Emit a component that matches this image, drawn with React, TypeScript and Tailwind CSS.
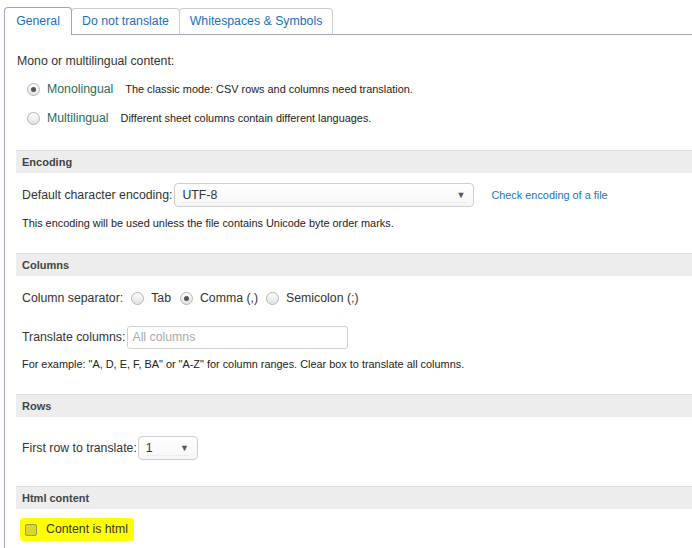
import React from "react";

function Radio({ checked = false }: { checked?: boolean }) {
  return (
    <span className="inline-flex h-[13px] w-[13px] shrink-0 items-center justify-center rounded-full border border-[#b5b5b5] bg-gradient-to-b from-[#fdfdfd] to-[#e2e2e2]">
      {checked && <span className="h-[5px] w-[5px] rounded-full bg-[#555]" />}
    </span>
  );
}

function SectionHeader({ title }: { title: string }) {
  return (
    <div className="ml-[11px] flex h-[23px] items-center border-t border-[#dcdcdc] bg-[#ededed] pl-[6px] text-[11px] font-bold text-[#444]">
      {title}
    </div>
  );
}

function Select({ value, width }: { value: string; width: string }) {
  return (
    <div
      className={`relative flex items-center justify-between rounded-[4px] border border-[#cfcfcf] bg-gradient-to-b from-white to-[#f6f6f6] pl-[7px] pr-[8px] ${width}`}
    >
      <span className="text-[12.3px] text-[#333]">{value}</span>
      <span className="text-[9px] leading-none text-[#555]">▼</span>
      <span className="absolute bottom-[3px] left-[8px] right-[8px] border-b border-dotted border-[#e4e4e4]" />
    </div>
  );
}

export default function App() {
  return (
    <div className="h-[548px] w-[692px] overflow-hidden bg-white font-['Liberation_Sans',Arial,sans-serif] text-[#333]">
      {/* tabs */}
      <div className="flex items-end pt-[7px] pl-[4px]">
        <div className="relative z-10 -mr-px flex h-[28px] w-[68px] items-center justify-center rounded-t-[4px] border border-b-0 border-[#a79fcb] bg-white text-[12.3px] text-[#1a6fbf]">
          General
        </div>
        <div className="flex h-[27px] w-[109px] items-center justify-center rounded-t-[4px] border border-[#cdcdcd] border-b-[#a79fcb] bg-white text-[12.3px] text-[#1a6fbf]">
          Do not translate
        </div>
        <div className="-ml-px flex h-[27px] w-[154px] items-center justify-center rounded-t-[4px] border border-[#cdcdcd] border-b-[#a79fcb] bg-white text-[12.3px] text-[#1a6fbf]">
          Whitespaces &amp; Symbols
        </div>
        <div className="h-[27px] flex-1 border-b border-[#a79fcb]" />
      </div>

      {/* panel */}
      <div className="ml-[4px] h-[520px] border-l border-[#a79fcb]">
        <div className="pl-[12px] pt-[18px] text-[12.3px] leading-[16px]">Mono or multilingual content:</div>

        <div className="mt-[12px] flex h-[16px] items-center pl-[22px]">
          <Radio checked />
          <span className="ml-[7px] text-[12.3px] text-[#2c6b5b]">Monolingual</span>
          <span className="ml-[12px] text-[10.9px] text-[#222]">The classic mode: CSV rows and columns need translation.</span>
        </div>
        <div className="mt-[13px] flex h-[16px] items-center pl-[22px]">
          <Radio />
          <span className="ml-[7px] text-[12.3px] text-[#2c6b5b]">Multilingual</span>
          <span className="ml-[12px] text-[10.9px] text-[#222]">Different sheet columns contain different languages.</span>
        </div>

        <div className="mt-[24px]">
          <SectionHeader title="Encoding" />
        </div>
        <div className="mt-[10px] flex h-[24px] items-center pl-[17px] text-[12.3px]">
          <span className="mr-[2px]">Default character encoding:</span>
          <Select value="UTF-8" width="h-[24px] w-[300px]" />
          <span className="ml-[17px] text-[10.9px] text-[#1a73c0]">Check encoding of a file</span>
        </div>
        <div className="mt-[9px] pl-[17px] text-[10.9px] leading-[14px] text-[#222]">
          This encoding will be used unless the file contains Unicode byte order marks.
        </div>

        <div className="mt-[23px]">
          <SectionHeader title="Columns" />
        </div>
        <div className="mt-[14px] flex h-[16px] items-center pl-[17px] text-[12.3px]">
          <span className="mr-[8px]">Column separator:</span>
          <Radio />
          <span className="ml-[7px] mr-[9px]">Tab</span>
          <Radio checked />
          <span className="ml-[7px] mr-[8px]">Comma (,)</span>
          <Radio />
          <span className="ml-[7px]">Semicolon (;)</span>
        </div>
        <div className="mt-[20px] flex h-[23px] items-center pl-[17px] text-[12.3px]">
          <span className="mr-[2px]">Translate columns:</span>
          <div className="flex h-[23px] w-[221px] items-center rounded-[3px] border border-[#d0d0d0] pl-[4px] text-[#aaa]">
            All columns
          </div>
        </div>
        <div className="mt-[8px] pl-[17px] text-[10.9px] leading-[14px] text-[#222]">
          For example: "A, D, E, F, BA" or "A-Z" for column ranges. Clear box to translate all columns.
        </div>

        <div className="mt-[23px]">
          <SectionHeader title="Rows" />
        </div>
        <div className="mt-[19px] flex h-[24px] items-center pl-[17px] text-[12.3px]">
          <span className="mr-[1px]">First row to translate:</span>
          <Select value="1" width="h-[24px] w-[60px]" />
        </div>

        <div className="mt-[26px]">
          <SectionHeader title="Html content" />
        </div>
        <div className="mt-[9px] pl-[15px]">
          <div className="inline-flex h-[23px] items-center rounded-[4px] bg-[#ffff00] pl-[5px] pr-[6px]">
            <span className="h-[12px] w-[12px] rounded-[2px] border border-[#9c9c58] bg-[#d9d92a]" />
            <span className="ml-[9px] text-[12.3px] text-[#333]">Content is html</span>
          </div>
        </div>
      </div>
    </div>
  );
}
